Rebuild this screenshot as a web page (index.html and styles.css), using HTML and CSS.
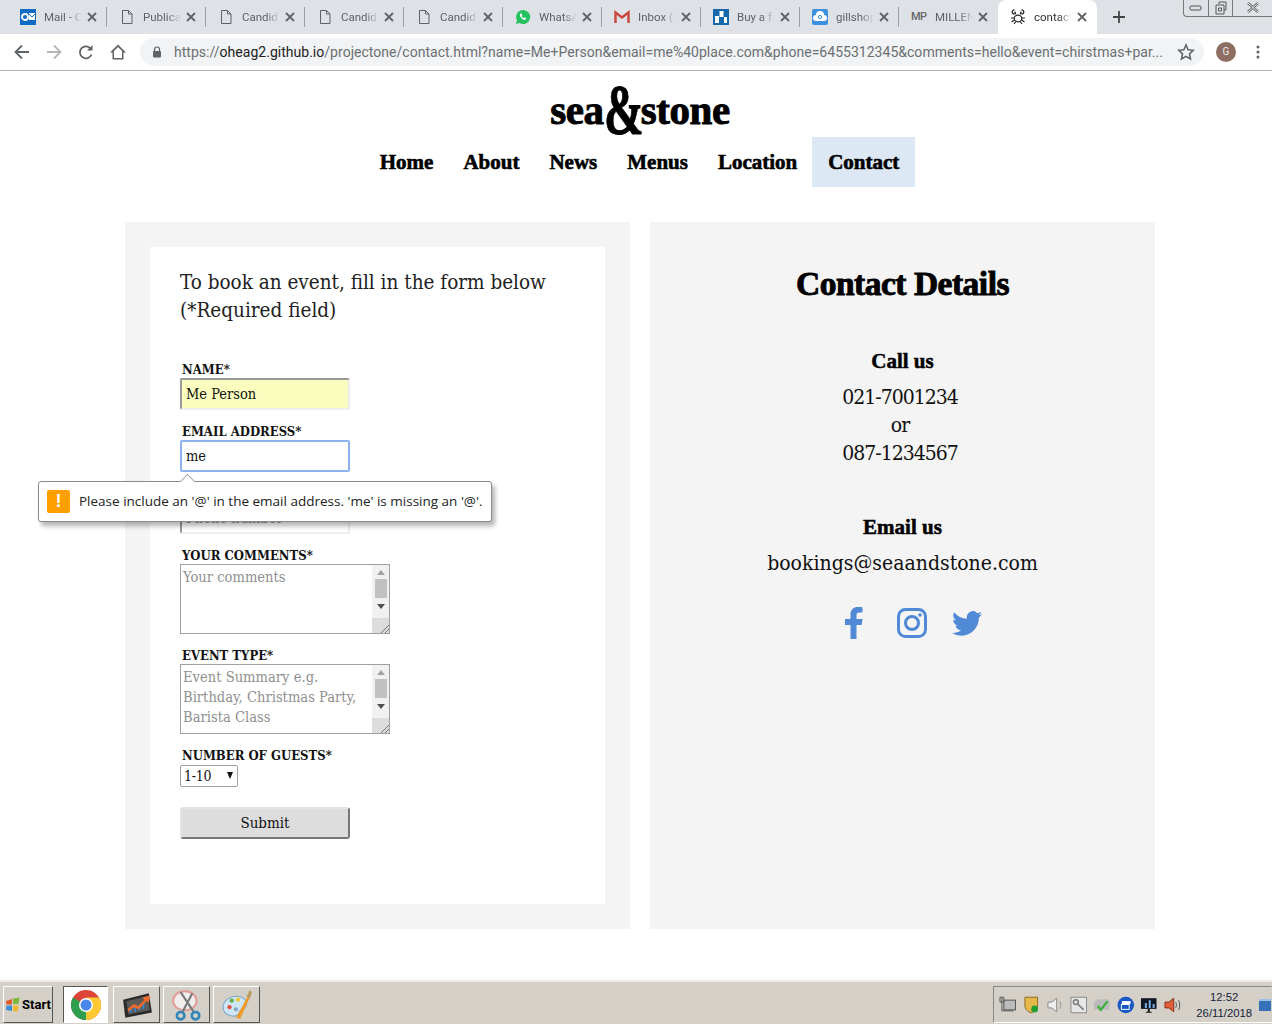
FILE: index.html
```html
<!DOCTYPE html>
<html>
<head>
    <meta charset="utf-8" />
    <meta name="viewport" content="width=device-width, initial-scale=1.0" />
    <title>contact</title>
    <link rel="stylesheet" href="styles.css">
</head>
<body>
    <svg class="defs" width="0" height="0">
        <symbol id="doc" viewBox="0 0 16 16"><path d="M3.500 1.500h6l3.500 3.500v9.500h-9.500z M9.500 1.500v3.500h3.500" fill="none" stroke="#5f6368" stroke-width="1"/></symbol>
        <symbol id="x" viewBox="0 0 10 10"><path d="M1 1l8 8M9 1l-8 8" fill="none" stroke="#5f6368" stroke-width="1.800"/></symbol>
    </svg>

    <div class="tabstrip">
        <div class="tab">
            <svg class="favicon" viewBox="0 0 16 16"><rect x="0" y="0" width="16" height="16" fill="#0f6cc4"/><rect x="9" y="4" width="6" height="7" fill="#fff"/><path d="M9 5l3 3 3-3" fill="none" stroke="#0f6cc4"/><circle cx="5" cy="8" r="3" fill="none" stroke="#fff" stroke-width="1.800"/></svg>
            <span class="tab-title">Mail - C</span>
            <svg class="tab-x"><use href="#x"/></svg>
        </div>
        <div class="tab">
            <svg class="favicon"><use href="#doc"/></svg>
            <span class="tab-title">Publica</span>
            <svg class="tab-x"><use href="#x"/></svg>
        </div>
        <div class="tab">
            <svg class="favicon"><use href="#doc"/></svg>
            <span class="tab-title">Candid</span>
            <svg class="tab-x"><use href="#x"/></svg>
        </div>
        <div class="tab">
            <svg class="favicon"><use href="#doc"/></svg>
            <span class="tab-title">Candid</span>
            <svg class="tab-x"><use href="#x"/></svg>
        </div>
        <div class="tab">
            <svg class="favicon"><use href="#doc"/></svg>
            <span class="tab-title">Candid</span>
            <svg class="tab-x"><use href="#x"/></svg>
        </div>
        <div class="tab">
            <svg class="favicon" viewBox="0 0 16 16"><path d="M8 1a7 7 0 0 0-6 10.500l-1 3.500 3.600-1A7 7 0 1 0 8 1z" fill="#25c15f"/><path d="M5.500 4.500c-1 1-.8 2.600.8 4.400 1.700 1.800 3.300 2.300 4.400 1.500l.6-1.200-1.900-1-.8.800c-.8-.3-1.700-1.200-2-2l.7-.8-.9-2z" fill="#fff"/></svg>
            <span class="tab-title">WhatsA</span>
            <svg class="tab-x"><use href="#x"/></svg>
        </div>
        <div class="tab">
            <svg class="favicon" viewBox="0 0 16 16"><path d="M1.500 14V3.500l6.500 5 6.500-5V14" fill="none" stroke="#c9463a" stroke-width="2.400"/></svg>
            <span class="tab-title">Inbox (</span>
            <svg class="tab-x"><use href="#x"/></svg>
        </div>
        <div class="tab">
            <svg class="favicon" viewBox="0 0 16 16"><rect width="16" height="16" fill="#1668ad"/><rect x="2" y="7" width="4" height="7" fill="#fff"/><rect x="6.500" y="2" width="4" height="6" fill="#fff"/><rect x="11" y="8" width="3" height="6" fill="#fff"/></svg>
            <span class="tab-title">Buy a f</span>
            <svg class="tab-x"><use href="#x"/></svg>
        </div>
        <div class="tab">
            <svg class="favicon" viewBox="0 0 16 16"><rect width="16" height="16" rx="2" fill="#3d8fe0"/><path d="M4 12a3 3 0 0 1 0-6 4 4 0 0 1 8 0 3 3 0 0 1 0 6z" fill="#fff"/><circle cx="8" cy="8" r="1.600" fill="none" stroke="#3d8fe0"/></svg>
            <span class="tab-title">gillshop</span>
            <svg class="tab-x"><use href="#x"/></svg>
        </div>
        <div class="tab">
            <span class="favicon mp-logo">MP</span>
            <span class="tab-title">MILLEN</span>
            <svg class="tab-x"><use href="#x"/></svg>
        </div>
        <div class="tab tab-active">
            <svg class="favicon" viewBox="0 0 16 16"><g fill="none" stroke="#222" stroke-width="1.200"><ellipse cx="8" cy="9.500" rx="3.800" ry="3.400"/><path d="M4.500 1a2 2 0 1 0 1 3.500L4.800 2.500M11.500 1a2 2 0 1 1-1 3.500l.7-2M1 9h3M12 9h3M1.500 13l3-2M14.500 13l-3-2M4 15l2-2.500M12 15l-2-2.500"/></g></svg>
            <span class="tab-title">contact</span>
            <svg class="tab-x"><use href="#x"/></svg>
        </div>
        <svg class="new-tab" viewBox="0 0 12 12"><path d="M6 0v12M0 6h12" stroke="#444" stroke-width="1.800"/></svg>
        <div class="window-controls">
            <div class="win-btn"><svg viewBox="0 0 14 8" width="14" height="8"><rect x="1" y="2" width="11" height="4" rx="1" fill="none" stroke="#555"/></svg></div>
            <div class="win-btn"><svg viewBox="0 0 14 14" width="14" height="14"><path d="M5 3V1h7v8h-2M2 4h8v9H2zM4.500 7h3v3h-3z" fill="none" stroke="#555"/></svg></div>
            <div class="win-btn win-close"><svg viewBox="0 0 14 12" width="14" height="12"><path d="M2 1l10 9M12 1L2 10" stroke="#666" stroke-width="2.400"/><path d="M2 1l10 9M12 1L2 10" stroke="#e4e6ea" stroke-width="1"/></svg></div>
        </div>
    </div>

    <div class="toolbar">
        <svg class="tool" viewBox="0 0 16 16"><path d="M15 8H2M8 1.500L1.500 8 8 14.500" fill="none" stroke="#5f6368" stroke-width="1.800"/></svg>
        <svg class="tool" viewBox="0 0 16 16"><path d="M1 8h13M8 1.500L14.500 8 8 14.500" fill="none" stroke="#b4b7ba" stroke-width="1.800"/></svg>
        <svg class="tool" viewBox="0 0 16 16"><path d="M13.500 10.500a6 6 0 1 1-.6-5.500" fill="none" stroke="#5f6368" stroke-width="1.800"/><path d="M14.500 1v5.500H9z" fill="#5f6368"/></svg>
        <svg class="tool" viewBox="0 0 16 16"><path d="M8 .5L0 8.500h2.500v7h11v-7H16zM8 3l4 4v7H4V7z" fill="#5f6368" fill-rule="evenodd"/></svg>
        <div class="omnibox">
            <svg class="lock" viewBox="0 0 10 12"><path d="M2.500 5V3.500a2.500 2.500 0 0 1 5 0V5" fill="none" stroke="#5f6368" stroke-width="1.200"/><rect x="1" y="5" width="8" height="6.500" rx="1" fill="#5f6368"/></svg>
            <span class="url"><span class="url-dim">https://</span>oheag2.github.io<span class="url-dim">/projectone/contact.html?name=Me+Person&amp;email=me%40place.com&amp;phone=6455312345&amp;comments=hello&amp;event=chirstmas+par...</span></span>
            <svg class="star" viewBox="0 0 16 16"><path d="M8 1.800l1.900 4.200 4.600.5-3.400 3.100.9 4.600L8 11.900l-4 2.300.9-4.600L1.500 6.500 6.100 6z" fill="none" stroke="#5f6368" stroke-width="1.400"/></svg>
        </div>
        <div class="avatar">G</div>
        <svg class="menu-dots" viewBox="0 0 4 14"><circle cx="2" cy="2" r="1.500"/><circle cx="2" cy="7" r="1.500"/><circle cx="2" cy="12" r="1.500"/></svg>
    </div>

    <div class="page">
        <header class="site-header">
            <div class="logo">sea<span class="logo-amp">&amp;</span>stone</div>
            <nav class="nav">
                <a href="#">Home</a>
                <a href="#">About</a>
                <a href="#">News</a>
                <a href="#">Menus</a>
                <a href="#">Location</a>
                <a href="#" class="active">Contact</a>
            </nav>
        </header>

        <main class="panels">
            <section class="panel">
                <div class="form-card">
                    <h3 class="form-title">To book an event, fill in the form below (*Required field)</h3>
                    <form class="booking-form">
                        <label>NAME*</label>
                        <input type="text" class="field filled" value="Me Person">
                        <label>EMAIL ADDRESS*</label>
                        <div class="email-wrap">
                            <input type="text" class="field focused" value="me">
                            <div class="bubble">
                                <span class="bubble-arrow"></span>
                                <span class="bubble-icon">!</span>
                                <span class="bubble-text">Please include an '@' in the email address. 'me' is missing an '@'.</span>
                            </div>
                        </div>
                        <input type="text" class="field phone-field" placeholder="Phone number">
                        <label>YOUR COMMENTS*</label>
                        <div class="area">
                            <textarea placeholder="Your comments"></textarea>
                            <div class="scroll">
                                <span class="arrow-up"></span>
                                <span class="thumb"></span>
                                <span class="arrow-down"></span>
                                <span class="grip"><svg viewBox="0 0 8 8" width="8" height="8"><path d="M0 8l8-8M4 8l4-4" stroke="#777" fill="none"/></svg></span>
                            </div>
                        </div>
                        <label>EVENT TYPE*</label>
                        <div class="area">
                            <textarea placeholder="Event Summary e.g. Birthday, Christmas Party, Barista Class"></textarea>
                            <div class="scroll">
                                <span class="arrow-up"></span>
                                <span class="thumb"></span>
                                <span class="arrow-down"></span>
                                <span class="grip"><svg viewBox="0 0 8 8" width="8" height="8"><path d="M0 8l8-8M4 8l4-4" stroke="#777" fill="none"/></svg></span>
                            </div>
                        </div>
                        <label>NUMBER OF GUESTS*</label>
                        <div class="select-wrap">
                            <select><option>1-10</option></select>
                        </div>
                        <button type="button" class="submit">Submit</button>
                    </form>
                </div>
            </section>

            <section class="panel contact-panel">
                <h2>Contact Details</h2>
                <h4 class="call-title">Call us</h4>
                <p class="phones">021-7001234<br>or<br>087-1234567</p>
                <h4 class="email-title">Email us</h4>
                <p>bookings@seaandstone.com</p>
                <div class="socials">
                    <svg viewBox="0 0 18 32" width="18" height="32"><path d="M5.500 32V18H0v-6h5.500V7.500C5.500 2.500 8.500 0 13 0c2 0 4 .2 4.500.3v5.200h-3c-2.500 0-3 1.200-3 3V12h6l-.8 6h-5.200v14z" fill="#5089d6"/></svg>
                    <svg viewBox="0 0 30 30" width="30" height="30"><rect x="1.500" y="1.500" width="27" height="27" rx="7" fill="none" stroke="#5089d6" stroke-width="3"/><circle cx="15" cy="15" r="6.500" fill="none" stroke="#5089d6" stroke-width="3"/><circle cx="23" cy="7" r="1.800" fill="#5089d6"/></svg>
                    <svg viewBox="0 0 24 20" width="30" height="25"><path d="M24 2.400c-.9.400-1.800.7-2.800.8 1-.6 1.800-1.600 2.200-2.700-1 .6-2 1-3.100 1.200A4.900 4.900 0 0 0 12 6.200C7.900 6 4.300 4 1.700.9c-1.300 2.200-.7 5.100 1.500 6.600-.8 0-1.600-.2-2.200-.6 0 2.400 1.700 4.500 4 5-.7.200-1.500.2-2.200.1.600 2 2.500 3.400 4.600 3.400A9.900 9.900 0 0 1 0 17.500 14 14 0 0 0 7.500 19.700c9.100 0 14.300-7.700 14-14.600 1-.7 1.800-1.600 2.500-2.700z" fill="#5089d6"/></svg>
                </div>
            </section>
        </main>
    </div>

    <div class="taskbar">
        <div class="task-btn start-btn">
            <svg viewBox="0 0 16 16" width="16" height="16"><path d="M1 4l6-2v5.500H1.500z" fill="#e2592a"/><path d="M8 1.500l6.500-1-1 6.500H8z" fill="#7fb93c"/><path d="M1.500 8.500H7V14l-6-1z" fill="#3a8fd8"/><path d="M8 8.500h5.500l-1 6.500-4.500-1z" fill="#f2b92d"/></svg>
            <span>Start</span>
        </div>
        <div class="task-btn chrome-btn">
            <svg viewBox="0 0 30 30" width="30" height="30"><circle cx="15" cy="15" r="15" fill="#db4437"/><path d="M15 15L2 7.500A15 15 0 0 0 15 30l7.500-13z" fill="#2e9e4f"/><path d="M15 15v15A15 15 0 0 0 28 7.500H15z" fill="#fcc934"/><circle cx="15" cy="15" r="7" fill="#fff"/><circle cx="15" cy="15" r="5.500" fill="#4a87ed"/></svg>
        </div>
        <div class="task-btn">
            <svg viewBox="0 0 30 30" width="32" height="32"><path d="M2 10l24-6 3 18-25 5z" fill="#2b2b2b"/><path d="M5 11.500l20-5 2 13.500-20 4z" fill="#5d5a58"/><path d="M8 22v-4h2v4zM12 21v-6h2v6zM16 20v-4h2v4zM20 19v-6h2v6z" fill="#3a82c8"/><path d="M6 19l6-5 4 2 6-6-2-2 7-2-1 7-2-2-7 8-5-2-5 4z" fill="#ef6c2b"/></svg>
        </div>
        <div class="task-btn">
            <svg viewBox="0 0 30 30" width="32" height="32"><ellipse cx="13" cy="11" rx="11" ry="9" fill="#f1eded" stroke="#e2a09c" stroke-width="2"/><path d="M9 3l12 18M20 4L11 21" stroke="#7a7a7a" stroke-width="2"/><circle cx="9" cy="25" r="3.500" fill="none" stroke="#2f86b9" stroke-width="2.400"/><circle cx="23" cy="25" r="3.500" fill="none" stroke="#2f86b9" stroke-width="2.400"/></svg>
        </div>
        <div class="task-btn">
            <svg viewBox="0 0 30 30" width="32" height="32"><path d="M2 17C2 10 10 6 17 7c6 1 8 6 6 10-2 3-5 2-6 5s-4 4-8 3-7-4-7-8z" fill="#cfe6f5" stroke="#7fa9c6"/><circle cx="8" cy="17" r="2" fill="#e0503f"/><circle cx="10" cy="11" r="2" fill="#62b34a"/><circle cx="16" cy="10" r="2" fill="#f0c83a"/><circle cx="14" cy="19" r="2" fill="#88aac2"/><path d="M14 27L25 7l2 1-9 20z" fill="#f09a2a"/><path d="M24 7l3-6 2 2-2 6z" fill="#b89a62"/></svg>
        </div>
        <div class="tray">
            <svg viewBox="0 0 18 18" width="18" height="18"><rect x="5" y="4" width="12" height="10" fill="#bbb" stroke="#555"/><path d="M3 1v14M1 1h4v5H1zM3 15h12" stroke="#555" fill="none"/></svg>
            <svg viewBox="0 0 18 18" width="18" height="18"><path d="M2 1h13v9c0 3-3 6-6.500 7C5 16 2 13 2 10z" fill="#e5b84a" stroke="#8b6b1e"/><circle cx="12" cy="13" r="3.500" fill="#1f9e2f"/></svg>
            <svg viewBox="0 0 18 18" width="18" height="18"><path d="M2 6h4l5-4v14l-5-4H2z" fill="#eee" stroke="#888"/><path d="M14 5c1.500 2 1.500 6 0 8" stroke="#999" fill="none"/></svg>
            <svg viewBox="0 0 18 18" width="18" height="18"><rect x="1" y="1" width="16" height="16" fill="#e6e6e6" stroke="#888"/><circle cx="6" cy="6" r="2.500" fill="none" stroke="#777" stroke-width="1.500"/><path d="M8 8l6 6" stroke="#777" stroke-width="1.500"/></svg>
            <svg viewBox="0 0 18 18" width="18" height="18"><path d="M1 6l4-3h10l2 3v8H1z" fill="#bbb"/><path d="M5 10l3 4 7-9" stroke="#3eb13e" stroke-width="2.400" fill="none"/></svg>
            <svg viewBox="0 0 18 18" width="18" height="18"><circle cx="9" cy="9" r="8.500" fill="#1957c4"/><rect x="5" y="5" width="9" height="3" fill="#fff"/><rect x="4" y="8" width="9" height="6" fill="#fff"/><rect x="5" y="9" width="7" height="4" fill="#1957c4"/></svg>
            <svg viewBox="0 0 18 18" width="18" height="18"><rect x="1" y="2" width="16" height="11" fill="#101828"/><path d="M5 12V7h2v5zM9 12V4h2v8zM13 12V8h2v4z" fill="#7fb2e5"/><path d="M6 16h6v1H6zM8 13h2v3H8z" fill="#111"/></svg>
            <svg viewBox="0 0 18 18" width="18" height="18"><path d="M1 6h4l5-4v14l-5-4H1z" fill="#e0603a" stroke="#8b2f16"/><path d="M12 6c1 1.500 1 4.500 0 6M15 4c1.500 2.500 1.500 7.500 0 10" stroke="#555" fill="none"/></svg>
            <div class="clock"><span>12:52</span><span>26/11/2018</span></div>
            <div class="show-desktop"></div>
        </div>
    </div>
</body>
</html>
```
FILE: styles.css
```css
* {
    box-sizing: border-box;
}
html, body {
    margin: 0;
    height: 1024px;
    overflow: hidden;
}
body {
    display: flex;
    flex-direction: column;
    background: white;
    font-family: "DejaVu Serif", serif;
    color: #111;
}
.defs {
    position: absolute;
}

/* browser tabs */
.tabstrip {
    height: 34px;
    flex: none;
    display: flex;
    padding-left: 8px;
    background: #dee1e6;
    font-family: Roboto, sans-serif;
}
.tab {
    width: 99px;
    height: 34px;
    position: relative;
    display: flex;
    align-items: center;
    padding-left: 12px;
}
.tab::after {
    content: "";
    position: absolute;
    right: 0;
    top: 7px;
    height: 20px;
    width: 1px;
    background: #9aa0a6;
}
.tab:nth-child(10)::after,
.tab-active::after {
    display: none;
}
.tab-active {
    background: white;
    border-radius: 8px 8px 0 0;
}
.favicon {
    width: 16px;
    height: 16px;
    flex: none;
}
.mp-logo {
    font-size: 11px;
    font-weight: 500;
    letter-spacing: -0.5px;
    color: #666;
    line-height: 16px;
}
.tab-title {
    width: 41px;
    margin-left: 8px;
    overflow: hidden;
    white-space: nowrap;
    font-size: 11.5px;
    color: #5f6368;
    -webkit-mask-image: linear-gradient(to right, black 60%, transparent 92%);
    mask-image: linear-gradient(to right, black 60%, transparent 92%);
}
.tab-active .tab-title {
    color: #333;
}
.tab-x {
    width: 10px;
    height: 10px;
    margin-left: 2px;
    flex: none;
}
.new-tab {
    width: 12px;
    height: 12px;
    margin: 11px 0 0 16px;
}
.window-controls {
    margin-left: auto;
    height: 17px;
    width: 89px;
    display: flex;
    border: 1px solid #777;
    border-top: none;
    border-right: none;
    border-radius: 0 0 0 4px;
}
.win-btn {
    width: 25px;
    display: flex;
    align-items: center;
    justify-content: center;
    border-right: 1px solid #777;
}
.win-close {
    width: 39px;
    border-right: none;
}

/* address bar */
.toolbar {
    height: 37px;
    flex: none;
    display: flex;
    align-items: center;
    padding: 0 0 1px 14px;
    background: white;
    border-bottom: 1px solid #b5b5b5;
}
.tool {
    width: 16px;
    height: 16px;
    margin-right: 16px;
    flex: none;
}
.omnibox {
    width: 1064px;
    height: 28px;
    margin-left: -2px;
    display: flex;
    align-items: center;
    padding: 0 9px 0 12px;
    border-radius: 14px;
    background: #f1f3f4;
}
.lock {
    width: 10px;
    height: 12px;
    flex: none;
}
.url {
    margin-left: 12px;
    font-family: Roboto, sans-serif;
    font-size: 14px;
    letter-spacing: 0.023px;
    white-space: nowrap;
    color: #222;
}
.url-dim {
    color: #6b6f73;
}
.star {
    width: 18px;
    height: 18px;
    margin-left: auto;
}
.avatar {
    width: 20px;
    height: 20px;
    margin-left: 12px;
    border-radius: 50%;
    background: #8d6e63;
    color: #eee;
    font: 10px/20px Roboto, sans-serif;
    text-align: center;
}
.menu-dots {
    width: 4px;
    height: 14px;
    margin-left: 20px;
    fill: #5f6368;
}

/* page */
.page {
    flex: 1;
    min-height: 0;
    padding-left: 8px;
}
.site-header {
    display: flex;
    flex-direction: column;
    align-items: center;
}
.logo {
    height: 66px;
    padding-top: 13px;
    font-family: "Liberation Serif", serif;
    font-weight: bold;
    font-size: 41px;
    line-height: 52px;
    letter-spacing: -0.4px;
    color: #000;
    -webkit-text-stroke: 0.9px #000;
    white-space: nowrap;
}
.logo-amp {
    display: inline-block;
    width: 37px;
    font-size: 72px;
    line-height: 40px;
    vertical-align: -10px;
    transform: scaleX(0.66);
    transform-origin: left center;
}
.nav {
    display: flex;
}
.nav a {
    height: 50px;
    padding: 0 15px;
    font-family: "Liberation Serif", serif;
    font-weight: bold;
    font-size: 21px;
    line-height: 50px;
    color: #000;
    text-decoration: none;
    -webkit-text-stroke: 0.6px #000;
}
.nav a.active {
    min-width: 103px;
    text-align: center;
    background: #dde8f5;
}
.panels {
    display: grid;
    grid-template-columns: 505px 505px;
    gap: 20px;
    justify-content: center;
    margin-top: 35px;
}
.panel {
    height: 707px;
    padding: 25px;
    background: #f4f4f4;
}
.form-card {
    height: 657px;
    padding: 21px 30px;
    background: white;
}
.form-title {
    margin: 0 0 36px;
    font-weight: normal;
    font-size: 20.5px;
    line-height: 28px;
    font-stretch: condensed;
    color: #222;
}
.booking-form {
    display: flex;
    flex-direction: column;
    align-items: flex-start;
}
.booking-form label {
    height: 18px;
    margin-left: 2px;
    font-size: 13px;
    line-height: 20px;
    font-weight: bold;
    font-stretch: condensed;
    color: #111;
}
.field {
    width: 170px;
    height: 32px;
    margin-bottom: 12px;
    padding: 0 4px;
    font: 14.5px "DejaVu Serif", serif;
    font-stretch: condensed;
    color: #111;
    background: white;
    border: 2px solid;
    border-color: #9a9a9a #eee #eee #9a9a9a;
    border-radius: 2px;
    outline: none;
}
.filled {
    background: #fafdbd;
}
.focused {
    border-color: #8fb2ee;
}
.phone-field {
    margin-top: 18px;
}
.email-wrap {
    position: relative;
    height: 44px;
}

/* validation bubble */
.bubble {
    position: absolute;
    left: -142px;
    top: 41px;
    z-index: 2;
    width: 454px;
    height: 41px;
    display: flex;
    align-items: center;
    padding-left: 8px;
    background: white;
    border: 1px solid #8a8a8a;
    border-radius: 3px;
    box-shadow: 3px 4px 5px rgba(0,0,0,0.3);
}
.bubble-arrow {
    position: absolute;
    left: 143px;
    top: -6px;
    width: 11px;
    height: 11px;
    background: white;
    border-left: 1px solid #aaa;
    border-top: 1px solid #aaa;
    transform: rotate(45deg);
}
.bubble-icon {
    width: 23px;
    height: 23px;
    flex: none;
    border-radius: 2px;
    background: #ffa000;
    color: white;
    font: bold 18px/23px "Liberation Sans", sans-serif;
    text-align: center;
}
.bubble-text {
    margin: 0 0 2px 9px;
    font-family: "Open Sans", sans-serif;
    font-size: 13.5px;
    white-space: nowrap;
    color: #222;
}

/* textareas with their drawn scrollbar */
.area {
    width: 210px;
    height: 70px;
    margin-bottom: 12px;
    display: flex;
    border: 1px solid #a0a0a0;
    background: white;
}
.area textarea {
    flex: 1;
    min-width: 0;
    height: 100%;
    padding: 2px;
    border: none;
    outline: none;
    resize: none;
    overflow: hidden;
    font: 14.6px/20px "DejaVu Serif", serif;
    font-stretch: condensed;
    background: white;
}
.area textarea::placeholder,
.field::placeholder {
    color: #8f8f8f;
    opacity: 1;
}
.scroll {
    width: 17px;
    flex: none;
    display: flex;
    flex-direction: column;
    align-items: center;
    background: #f1f1f1;
}
.arrow-up {
    margin-top: 5px;
    border: 4px solid transparent;
    border-top: none;
    border-bottom: 5px solid #a3a3a3;
}
.thumb {
    width: 12px;
    height: 19px;
    margin-top: 4px;
    background: #c1c1c1;
}
.arrow-down {
    margin-top: 6px;
    border: 4px solid transparent;
    border-bottom: none;
    border-top: 5px solid #505050;
}
.grip {
    width: 17px;
    height: 15px;
    margin-top: auto;
    display: flex;
    align-items: flex-end;
    justify-content: flex-end;
    background: #dcdcdc;
}
.grip svg {
    display: block;
}
.select-wrap {
    position: relative;
    height: 22px;
    margin-top: 1px;
}
.select-wrap::after {
    content: "";
    position: absolute;
    right: 5px;
    top: 7px;
    border: 3.5px solid transparent;
    border-bottom: none;
    border-top: 7px solid #111;
}
.select-wrap select {
    display: block;
    width: 58px;
    height: 22px;
    padding: 0 0 0 3px;
    appearance: none;
    -webkit-appearance: none;
    font: 14px "DejaVu Serif", serif;
    font-stretch: condensed;
    letter-spacing: -0.3px;
    color: #111;
    background: white;
    border: 1px solid #a0a0a0;
    border-radius: 2px;
}
.submit {
    width: 170px;
    height: 32px;
    margin-top: 20px;
    padding: 0;
    font: 15px "DejaVu Serif", serif;
    font-stretch: condensed;
    color: #111;
    background: #ddd;
    border: 2px solid;
    border-color: #e4e4e4 #777 #777 #e4e4e4;
    border-radius: 3px;
}

/* contact details */
.contact-panel {
    text-align: center;
}
.contact-panel h2 {
    margin: 17px 0 0;
    font-family: "Liberation Serif", serif;
    font-size: 33.5px;
    line-height: 40px;
    letter-spacing: -0.5px;
    color: #000;
    -webkit-text-stroke: 0.9px #000;
}
.contact-panel h4 {
    margin: 0;
    font-family: "Liberation Serif", serif;
    font-size: 21px;
    line-height: 28px;
    color: #000;
    -webkit-text-stroke: 0.5px #000;
}
.call-title {
    padding-top: 43px;
}
.email-title {
    padding-top: 46px;
}
.contact-panel p {
    margin: 8px 0 0;
    font-size: 21px;
    line-height: 28px;
    font-stretch: condensed;
    color: #111;
}
.contact-panel .phones {
    padding-right: 5px;
    letter-spacing: -1px;
}
.socials {
    display: flex;
    align-items: center;
    justify-content: center;
    margin-top: 30px;
    padding-left: 21px;
}
.socials svg:first-child {
    margin-right: 34px;
}
.socials svg:nth-child(2) {
    margin-right: 25px;
}

/* windows taskbar */
.taskbar {
    height: 44px;
    flex: none;
    display: flex;
    align-items: center;
    gap: 3px;
    padding: 3px 0 0 3px;
    background: #d4d0c8;
    border-top: 2px solid #eeece7;
}
.task-btn {
    width: 47px;
    height: 37px;
    display: flex;
    align-items: center;
    justify-content: center;
    background: #d4d0c8;
    border: 1px solid;
    border-color: #fff #555 #555 #fff;
}
.start-btn {
    width: 50px;
    margin-right: 7px;
    gap: 1px;
    font: bold 13px Roboto, "Liberation Sans", sans-serif;
    color: #000;
}
.chrome-btn {
    width: 45px;
    background: white;
    border-color: #555 #fff #fff #555;
    margin-right: 2px;
}
.tray {
    margin-left: auto;
    width: 279px;
    height: 37px;
    display: flex;
    align-items: center;
    gap: 6px;
    padding-left: 5px;
    border: 1px solid;
    border-color: #888 transparent #fff #888;
    white-space: nowrap;
}
.clock {
    display: flex;
    flex-direction: column;
    align-items: center;
    width: 60px;
    margin-left: 8px;
    font: 11.3px/16px "Liberation Sans", sans-serif;
    color: #16233a;
}
.show-desktop {
    width: 12px;
    height: 12px;
    background: #3572b8;
    border-top: 2px solid #9ac0e8;
}
```
